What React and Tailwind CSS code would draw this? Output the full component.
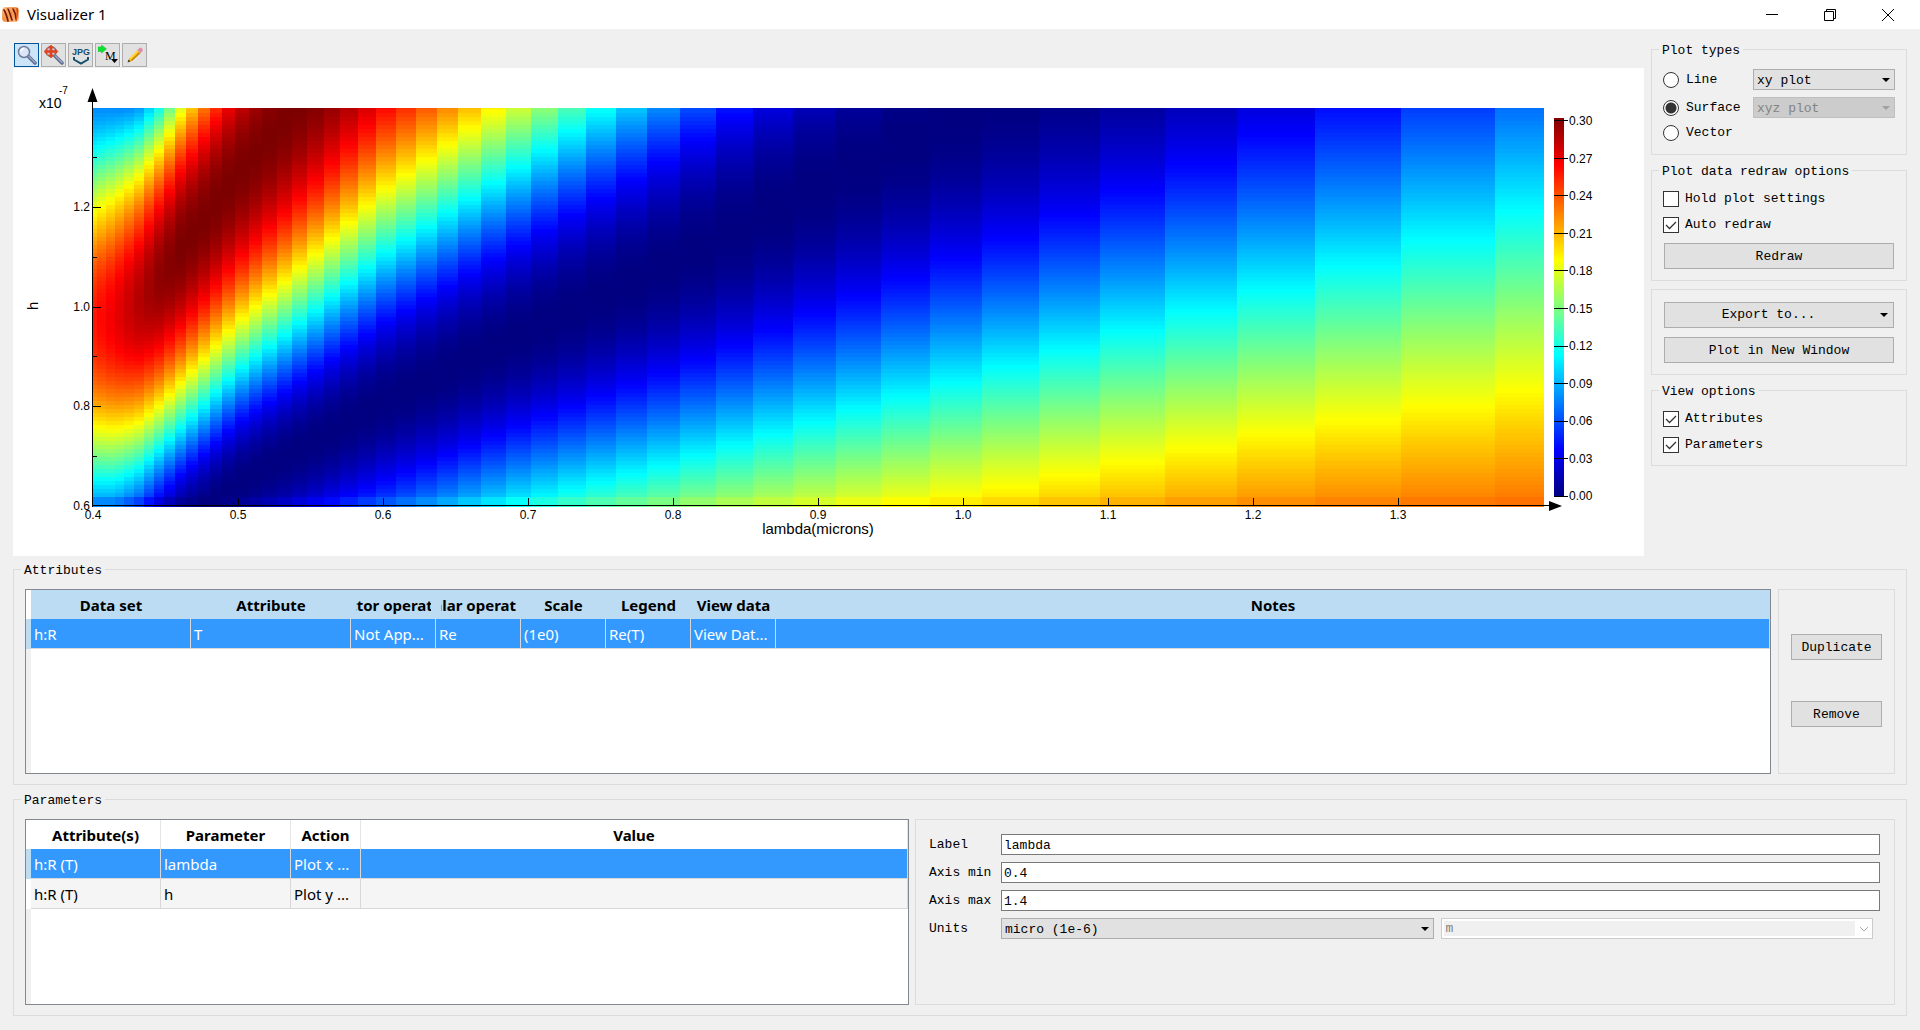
import { useId } from 'react'
import clsx from 'clsx'

/* ---------- surface data ---------- */

// [lambda, phase offset, phase slope * lambda, low, high]
const FIT = [
  [0.4, 0.007, 2.588, 0.13, 0.85],
  [0.415, 0.11, 2.61, 0.12, 0.89],
  [0.43, 0.153, 2.62, 0.07, 0.94],
  [0.445, 0.12, 2.6, 0.02, 0.98],
  [0.46, 0.083, 2.56, 0, 1],
  [0.5, -0.12, 2.525, 0, 1],
  [0.6, 0.03, 2.31, 0, 1],
  [0.693, -0.04, 2.34, 0, 1],
  [0.793, 0.04, 2.28, 0, 1],
  [0.897, 0.12, 2.19, 0, 1],
  [1.0, 0.18, 2.13, 0, 1],
  [1.215, 0.225, 2.08, 0, 1],
  [1.4, 0.36, 1.92, 0, 1],
]

function fitAt(lambda) {
  let i = 0
  while (i < FIT.length - 2 && lambda > FIT[i + 1][0]) i++
  const a = FIT[i]
  const b = FIT[i + 1]
  const t = (lambda - a[0]) / (b[0] - a[0])
  return a.map((v, k) => v + (b[k] - v) * t)
}

function reflectance(lambda, h) {
  const [, offset, slope, low, high] = fitAt(lambda)
  const c = Math.cos(offset + (slope / lambda) * h)
  const s = (0.18 * (1 + c)) / (1.008 + 0.18 * c) / 0.302
  // thick layers keep some signal below 0.45 um
  const lift = Math.max(0, h - 1.15) * 0.4 * Math.max(0, (0.45 - lambda) / 0.05)
  return low + (high - low) * s + lift
}

function jet(v) {
  const ch = (center) => {
    const x = Math.min(1, Math.max(0, 1.5 - Math.abs(4 * v - center)))
    return Math.round(x * 255)
  }
  return `rgb(${ch(3)},${ch(2)},${ch(1)})`
}

// plot area inside the 1631 x 488 drawing
const X0 = 80
const X1 = 1531
const Y0 = 40
const Y1 = 438

const toX = (lambda) => X0 + (lambda - 0.4) * (X1 - X0)
const toY = (h) => Y1 - ((h - 0.6) / 0.8) * (Y1 - Y0)

const N_FREQ = 50
const lambdas = Array.from({ length: N_FREQ }, (_, i) => {
  const f = 2.5 + ((1 / 1.4 - 2.5) * i) / (N_FREQ - 1)
  return 1 / f
})

const rows = [{ h: 0.6, top: 429, bottom: 439 }]
for (let y = 429; y > Y0; y -= 4) {
  const top = Math.max(Y0, y - 4)
  rows.push({ h: 0.6 + ((Y1 - (top + y) / 2) / (Y1 - Y0)) * 0.8, top, bottom: y })
}

const cells = lambdas.flatMap((lambda, i) => {
  const left = i === 0 ? X0 : Math.round(toX((lambdas[i - 1] + lambda) / 2))
  const right = i === N_FREQ - 1 ? X1 : Math.round(toX((lambda + lambdas[i + 1]) / 2))
  return rows.map((r) => ({
    x: left,
    y: r.top,
    w: right - left,
    h: r.bottom - r.top,
    fill: jet(reflectance(lambda, r.h)),
  }))
})

const X_TICKS = [0.4, 0.5, 0.6, 0.7, 0.8, 0.9, 1.0, 1.1, 1.2, 1.3]
const Y_TICKS = [0.7, 0.8, 0.9, 1.0, 1.1, 1.2, 1.3]
const BAR_TICKS = [0.3, 0.27, 0.24, 0.21, 0.18, 0.15, 0.12, 0.09, 0.06, 0.03, 0]

function SurfacePlot() {
  return (
    <svg viewBox="0 0 1631 488" className="block w-full h-auto bg-white" role="img" aria-label="Surface plot of T" fontFamily="'Liberation Sans', Arial, sans-serif" fontSize="12">
      <defs>
        <linearGradient id="jet" x1="0" y1="1" x2="0" y2="0">
          {Array.from({ length: 33 }, (_, i) => (
            <stop key={i} offset={i / 32} stopColor={jet(i / 32)} />
          ))}
        </linearGradient>
      </defs>

      <g shapeRendering="crispEdges">
        {cells.map((c, i) => (
          <rect key={i} x={c.x} y={c.y} width={c.w} height={c.h} fill={c.fill} />
        ))}
        <rect x="1541" y="50" width="10" height="379" fill="url(#jet)" />
        <path d="M79 22h1v417h-1zM79 437h1459v1H79z" />
        {X_TICKS.slice(1).map((t) => (
          <rect key={t} x={Math.floor(toX(t))} y="430" width="1" height="8" />
        ))}
        {Y_TICKS.map((t) => (
          <rect key={t} x="80" y={Math.floor(toY(t))} width={Math.round(t * 10) % 2 ? 4 : 8} height="1" />
        ))}
        {BAR_TICKS.map((t, i) => (
          <rect key={t} x="1541" y={Math.round(52 + i * 37.6)} width="14" height="1" />
        ))}
      </g>
      <path d="M79.500 20l5 14h-10zM1536 433l13 5-13 5z" />

      {X_TICKS.map((t) => (
        <text key={t} x={Math.floor(toX(t))} y="451" textAnchor="middle">{t.toFixed(1)}</text>
      ))}
      {[0.6, 0.8, 1.0, 1.2].map((t) => (
        <text key={t} x="77" y={Math.floor(toY(t)) + 4} textAnchor="end">{t.toFixed(1)}</text>
      ))}
      {BAR_TICKS.map((t, i) => (
        <text key={t} x="1556" y={Math.round(57 + i * 37.5)}>{t.toFixed(2)}</text>
      ))}
      <text x="26" y="40" fontSize="14">x10</text>
      <text x="46" y="26" fontSize="10">-7</text>
      <text x="805" y="466" fontSize="15" textAnchor="middle">lambda(microns)</text>
      <text transform="translate(25 242) rotate(-90)" fontSize="15">h</text>
    </svg>
  )
}

/* ---------- icons ---------- */

function LogoIcon() {
  return (
    <svg className="size-5" viewBox="0 0 20 20">
      <defs>
        <linearGradient id="logo" x1="0" x2="1" y1="0" y2="1">
          <stop offset="0" stopColor="#fbc89c" />
          <stop offset=".5" stopColor="#f58a3c" />
          <stop offset="1" stopColor="#fbd5b5" />
        </linearGradient>
      </defs>
      <rect x="1" y="2" width="17" height="15" rx="4" fill="url(#logo)" />
      <path d="M3 5c2 3 3 7 4 11M7 4c2 4 3 8 4 11M12 4c2 3 3 6 3 10" stroke="#6d1a06" strokeWidth="1.600" strokeLinecap="round" fill="none" />
      <path d="M2 8c1 3 2 5 3 8M5 3c2 4 3 8 4 12M10 3c2 4 3 8 3 12" stroke="#f9a05a" fill="none" />
      <path d="M16 3c1 4 0 8-1 13" stroke="#d8480f" strokeWidth="1.500" fill="none" />
    </svg>
  )
}

function ZoomIcon() {
  return (
    <svg className="size-5" viewBox="0 0 20 20">
      <path d="M11 11l7 7" stroke="#5d6b8c" strokeWidth="3.500" strokeLinecap="round" />
      <path d="M11.500 11l6.500 6.500" stroke="#9aa6c4" strokeWidth="1.500" strokeLinecap="round" />
      <circle cx="7" cy="7" r="5.500" fill="#dbe6f7" stroke="#6f7c9c" strokeWidth="1.500" />
      <path d="M4 6.500a3 3 0 013-3" stroke="#fff" strokeWidth="1.500" fill="none" />
    </svg>
  )
}

function ZoomExtentIcon() {
  return (
    <svg className="size-5" viewBox="0 0 20 20">
      <path d="M11 11l7 7" stroke="#5d6b8c" strokeWidth="3.500" strokeLinecap="round" />
      <path d="M11.500 11l6.500 6.500" stroke="#9aa6c4" strokeWidth="1.500" strokeLinecap="round" />
      <circle cx="7" cy="6.500" r="5" fill="#c9ccd8" stroke="#7d86a0" strokeWidth="1.500" />
      <path d="M7 0l3 3H8v2.500h3v-2l3 3-3 3v-2H8V10h2l-3 3-3-3h2V7.500H3v2l-3-3 3-3v2h3V3H4z" fill="#dd4422" stroke="#dd4422" strokeWidth=".6" />
    </svg>
  )
}

function JpgIcon() {
  return (
    <svg className="size-5" viewBox="0 0 20 20">
      <text x="10" y="10" fontSize="9" fontWeight="700" fontFamily="'Liberation Sans', Arial, sans-serif" fill="#15506f" textAnchor="middle">JPG</text>
      <path d="M3 12v2.500l7 4 7-4V12" fill="none" stroke="#15506f" strokeWidth="2" />
    </svg>
  )
}

function MatlabIcon() {
  return (
    <svg className="size-5" viewBox="0 0 20 20">
      <path d="M0 2h3.500V0L8.500 4l-5 4V6.500H0z" fill="#10e030" stroke="#0bbf28" strokeWidth=".5" />
      <text x="7" y="15" fontSize="12" fontFamily="'Liberation Serif', 'Times New Roman', serif">M</text>
      <path d="M13 14h7l-3.500 4z" />
    </svg>
  )
}

function PencilIcon() {
  return (
    <svg className="size-5" viewBox="0 0 20 20">
      <path d="M3 17l1.500-4L13 4.500l3 3L7 16z" fill="#f4b50c" />
      <path d="M4.500 13l8.500-8.500 1.200 1.200L5.500 14.500z" fill="#ffdb4a" />
      <path d="M7 16l9-8.500-1-1L6 15z" fill="#c98104" />
      <path d="M12.500 5l2-2q1-1 2.500.5t.5 2.500l-2 2z" fill="#e58aa5" />
      <path d="M12.300 5.200l3 3" stroke="#b9b9c4" />
      <path d="M2.500 17.500l1-3 2 2z" fill="#4a3a20" />
    </svg>
  )
}

/* ---------- controls ---------- */

function GroupBox({ title, className, children }) {
  return (
    <section aria-label={title} className="border border-[#dcdcdc]">
      {title && (
        <h2 className="w-fit h-4 -mt-2 ml-[7px] px-[3px] bg-[#f0f0f0] leading-[18px]">{title}</h2>
      )}
      <div className={className}>{children}</div>
    </section>
  )
}

function Button({ className, children }) {
  return (
    <button type="button" className={clsx('h-[26px] border border-[#adadad] bg-[#e1e1e1] leading-none', className)}>
      {children}
    </button>
  )
}

function Caret({ className }) {
  return (
    <svg className={clsx('w-2 h-1 pointer-events-none', className)} viewBox="0 0 8 4">
      <path d="M0 0h8L4 4z" fill="currentColor" />
    </svg>
  )
}

function Select({ value, label, id, disabled, className }) {
  return (
    <div className={clsx('grid items-center', className)}>
      <select
        id={id}
        aria-label={label}
        disabled={disabled}
        className="col-start-1 row-start-1 h-[21px] w-full appearance-none border border-[#adadad] bg-[#e1e1e1] pl-[3px] pt-px leading-none disabled:border-[#bfbfbf] disabled:bg-[#cccccc] disabled:text-[#838383] disabled:opacity-100"
      >
        <option>{value}</option>
      </select>
      <Caret className={clsx('col-start-1 row-start-1 justify-self-end mr-[5px]', disabled && 'text-[#a0a0a0]')} />
    </div>
  )
}

function Radio({ label, checked }) {
  return (
    <label className="flex items-center gap-[7px] leading-4">
      <input
        type="radio"
        name="plot-type"
        defaultChecked={checked}
        className="size-4 appearance-none rounded-full border border-[#333] bg-white checked:bg-[radial-gradient(circle,#333_5px,#fff_6px)]"
      />
      {label}
    </label>
  )
}

function Checkbox({ label, checked }) {
  return (
    <label className="flex items-center gap-[6px] leading-4">
      <span className="grid">
        <input type="checkbox" defaultChecked={checked} className="peer col-start-1 row-start-1 size-4 appearance-none border border-[#333] bg-white" />
        <svg className="col-start-1 row-start-1 size-4 hidden peer-checked:block pointer-events-none" viewBox="0 0 16 16">
          <path d="M3 8l3.500 3.500L13 5" fill="none" stroke="#333" strokeWidth="1.300" />
        </svg>
      </span>
      {label}
    </label>
  )
}

function Field({ label, value }) {
  const id = useId()
  return (
    <>
      <label htmlFor={id} className="whitespace-nowrap">{label}</label>
      <input id={id} type="text" defaultValue={value} className="h-[21px] w-full min-w-0 border border-[#7a7a7a] bg-white px-[2px] pt-px" />
    </>
  )
}

const TOOLS = [
  { name: 'Zoom', icon: <ZoomIcon />, active: true },
  { name: 'Zoom extent', icon: <ZoomExtentIcon /> },
  { name: 'Export JPG', icon: <JpgIcon /> },
  { name: 'Export to Matlab', icon: <MatlabIcon /> },
  { name: 'Plot settings', icon: <PencilIcon /> },
]

const ATTRIBUTE_COLS = ['Data set', 'Attribute', 'Vector operation', 'Scalar operation', 'Scale', 'Legend', 'View data', 'Notes']
const ATTRIBUTE_ROW = ['h:R', 'T', 'Not App...', 'Re', '(1e0)', 'Re(T)', 'View Dat...', '']

const PARAMETER_COLS = ['Attribute(s)', 'Parameter', 'Action', 'Value']
const PARAMETER_ROWS = [
  { cells: ['h:R (T)', 'lambda', 'Plot x ...', ''], selected: true },
  { cells: ['h:R (T)', 'h', 'Plot y ...', ''] },
]

function DataTable({ cols, rows, widths, highlightHead }) {
  return (
    <div className="h-full border border-[#828790] bg-white font-['Noto_Sans','Open_Sans',sans-serif] text-[15px] flex">
      <div className="w-[5px] shrink-0 bg-[#f0f0f0] flex flex-col">
        <div className="h-[29px] bg-white" />
        {rows.map((r, i) => (
          <div key={i} className={clsx('h-[30px]', r.selected ? 'bg-[#bcdcf4]' : 'bg-white')} />
        ))}
      </div>
      <div className="flex-1 min-w-0">
        <table className="w-full table-fixed border-separate border-spacing-0">
          <colgroup>
            {widths.map((w, i) => (
              <col key={i} className={w} />
            ))}
          </colgroup>
          <thead className={highlightHead ? 'bg-[#bcdcf4]' : 'bg-white'}>
            <tr className="h-[29px]">
              {cols.map((c) => (
                <th key={c} className={clsx('p-0 font-bold', !highlightHead && 'border-r border-[#e5e5e5]')}>
                  <div className="mx-[5px] flex justify-center overflow-hidden whitespace-nowrap leading-5">
                    <span>{c}</span>
                  </div>
                </th>
              ))}
            </tr>
          </thead>
          <tbody>
            {rows.map((r, i) => (
              <tr key={i} className={clsx('h-[30px]', r.selected ? 'bg-[#3399ff] text-white' : 'bg-[#f5f5f5]')}>
                {r.cells.map((c, k) => (
                  <td key={k} className="border-r border-b border-[#d8d8d8] p-0 pl-[3px] whitespace-nowrap leading-5">{c}</td>
                ))}
              </tr>
            ))}
          </tbody>
        </table>
      </div>
    </div>
  )
}

/* ---------- page ---------- */

export default function App() {
  const unitsId = useId()

  return (
    <div className="min-h-screen bg-[#f0f0f0] font-['Liberation_Mono','Courier_New',monospace] text-[13px] text-black">
      {/* Title bar */}
      <header className="flex h-[29px] items-center bg-white pl-px pr-5">
        <LogoIcon />
        <h1 className="ml-[6px] flex-1 font-['Noto_Sans','Open_Sans',sans-serif] text-[15px]">Visualizer 1</h1>
        <div className="flex gap-[34px]">
          <button type="button" aria-label="Minimize" className="w-6">
            <svg className="mx-auto size-4" viewBox="0 0 16 16" stroke="#000" fill="none"><path d="M2 7.500h12" /></svg>
          </button>
          <button type="button" aria-label="Restore" className="w-6">
            <svg className="mx-auto size-4" viewBox="0 0 16 16" stroke="#000" fill="none"><path d="M2.500 4.500h9v9h-9zM4.500 4.500v-2h9v9h-2" /></svg>
          </button>
          <button type="button" aria-label="Close" className="w-6">
            <svg className="mx-auto size-4" viewBox="0 0 16 16" stroke="#000" fill="none"><path d="M2 2l12 12M14 2L2 14" /></svg>
          </button>
        </div>
      </header>

      <main className="px-[13px] pb-4">
        <div className="flex gap-[7px]">
          {/* Toolbar and plot */}
          <div className="flex-1 min-w-0">
            <div className="flex gap-[2px] pt-[14px] pb-px pl-px">
              {TOOLS.map((t) => (
                <button
                  key={t.name}
                  type="button"
                  aria-label={t.name}
                  className={clsx('flex h-6 w-[25px] items-center justify-center border', t.active ? 'border-[#005499] bg-[#cce4f7]' : 'border-[#adadad] bg-[#e1e1e1]')}
                >
                  {t.icon}
                </button>
              ))}
            </div>
            <SurfacePlot />
          </div>

          {/* Options */}
          <aside className="w-64 shrink-0 pt-5">
            <GroupBox title="Plot types" className="px-[11px] pt-[11px] pb-[13px]">
              <div className="grid grid-cols-[90px_1fr] items-center gap-y-[7px]">
                <Radio label="Line" />
                <Select value="xy plot" label="Line plot type" />
                <Radio label="Surface" checked />
                <Select value="xyz plot" label="Surface plot type" disabled />
                <Radio label="Vector" />
              </div>
            </GroupBox>

            <div className="mt-[15px]">
              <GroupBox title="Plot data redraw options" className="flex flex-col gap-[10px] px-[11px] pt-3 pb-[11px]">
                <Checkbox label="Hold plot settings" />
                <Checkbox label="Auto redraw" checked />
                <Button className="mx-px">Redraw</Button>
              </GroupBox>
            </div>

            <div className="mt-2">
              <GroupBox className="flex flex-col gap-[9px] px-3 pt-3 pb-[11px]">
                <button type="button" className="flex h-[26px] items-center border border-[#adadad] bg-[#e1e1e1] pr-[5px]">
                  <span className="flex-1 pr-2">Export to...</span>
                  <Caret />
                </button>
                <Button>Plot in New Window</Button>
              </GroupBox>
            </div>

            <div className="mt-[15px]">
              <GroupBox title="View options" className="flex flex-col gap-[10px] px-[11px] pt-3 pb-3">
                <Checkbox label="Attributes" checked />
                <Checkbox label="Parameters" checked />
              </GroupBox>
            </div>
          </aside>
        </div>

        {/* Attributes */}
        <div className="mt-[13px]">
          <GroupBox title="Attributes" className="flex gap-[7px] pl-[11px] pr-[11px] pt-[11px] pb-[10px]">
            <div className="h-[185px] flex-1 min-w-0">
              <DataTable
                cols={ATTRIBUTE_COLS}
                rows={[{ cells: ATTRIBUTE_ROW, selected: true }]}
                widths={['w-[160px]', 'w-[160px]', 'w-[85px]', 'w-[85px]', 'w-[85px]', 'w-[85px]', 'w-[85px]', 'w-auto']}
                highlightHead
              />
            </div>
            <div className="flex w-[117px] flex-col items-center gap-[41px] border border-[#dcdcdc] pt-11">
              <Button className="w-[91px]">Duplicate</Button>
              <Button className="w-[91px]">Remove</Button>
            </div>
          </GroupBox>
        </div>

        {/* Parameters */}
        <div className="mt-[14px]">
          <GroupBox title="Parameters" className="flex gap-[6px] pl-[11px] pr-[11px] pt-[11px] pb-[10px]">
            <div className="h-[186px] w-[884px] shrink-0">
              <DataTable
                cols={PARAMETER_COLS}
                rows={PARAMETER_ROWS}
                widths={['w-[130px]', 'w-[130px]', 'w-[70px]', 'w-auto']}
              />
            </div>
            <div className="flex-1 min-w-0 border border-[#dcdcdc] pl-[13px] pr-[14px] pt-[14px]">
              <div className="grid grid-cols-[72px_1fr] items-center gap-y-[7px]">
                <Field label="Label" value="lambda" />
                <Field label="Axis min" value="0.4" />
                <Field label="Axis max" value="1.4" />
                <label htmlFor={unitsId}>Units</label>
                <div className="flex gap-[7px] pr-[7px]">
                  <Select id={unitsId} value="micro (1e-6)" className="flex-1" />
                  <div className="grid flex-1 items-center">
                    <select aria-label="Base unit" disabled className="col-start-1 row-start-1 h-[21px] w-full appearance-none border border-[#cccccc] bg-[#f0f0f0] pl-1 text-[#838383] opacity-100 outline-2 -outline-offset-3 outline-white">
                      <option>m</option>
                    </select>
                    <span className="col-start-1 row-start-1 mr-px flex h-[19px] w-[17px] items-center justify-center justify-self-end bg-white pointer-events-none">
                      <svg className="h-[6px] w-[10px]" viewBox="0 0 10 6"><path d="M1 1l4 4 4-4" fill="none" stroke="#b0b0b0" /></svg>
                    </span>
                  </div>
                </div>
              </div>
            </div>
          </GroupBox>
        </div>
      </main>
    </div>
  )
}
